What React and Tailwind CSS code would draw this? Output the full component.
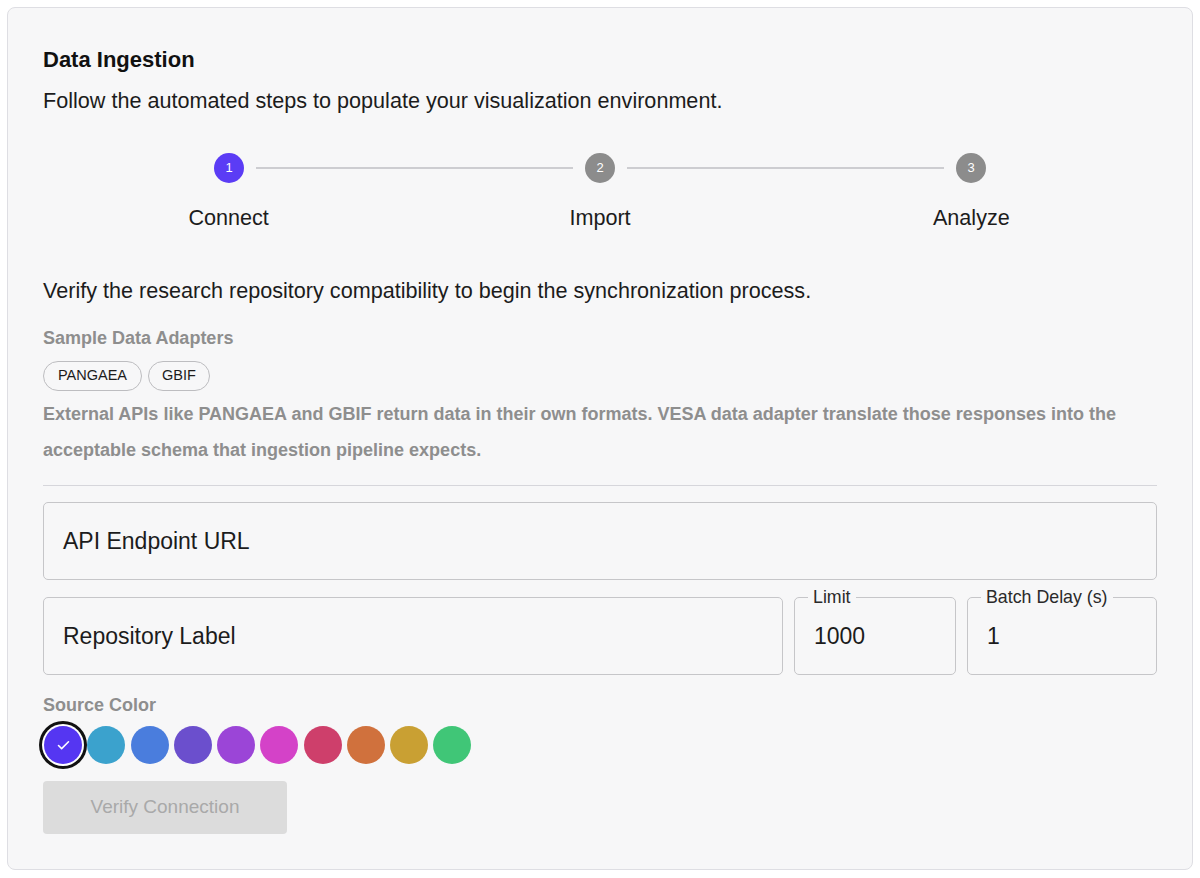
import { Check } from 'lucide-react'

const steps = ['Connect', 'Import', 'Analyze']

const swatches = [
  '#5536f2',
  '#3ba2cd',
  '#4a7ddd',
  '#6b4fcd',
  '#9b45d7',
  '#d442c8',
  '#ce3f6b',
  '#d0713d',
  '#c9a033',
  '#40c677',
]

function StepDot({ n, active }) {
  return (
    <div
      className={`flex h-[30px] w-[30px] shrink-0 items-center justify-center rounded-full text-[13px] text-white ${
        active ? 'bg-[#5b3cf5]' : 'bg-[#8c8c8c]'
      }`}
    >
      {n}
    </div>
  )
}

function OutlinedField({ label, value, className = '' }) {
  return (
    <div
      className={`relative flex h-[78px] items-center rounded-[5px] border border-[#c6c6c9] pl-[19px] text-[23px] text-[#1c1c1c] ${className}`}
    >
      {label && (
        <span className="absolute -top-[11px] left-[13px] bg-[#f7f7f8] px-[5px] text-[17.8px] leading-[20px] text-[#2a2a2a]">
          {label}
        </span>
      )}
      {value}
    </div>
  )
}

export default function App() {
  return (
    <div className="min-h-screen bg-white p-[7px] font-[family-name:'Liberation_Sans',Arial,sans-serif]">
      <div className="rounded-lg border border-[#dedee3] bg-[#f7f7f8] px-[35px] pb-[35px] pt-[38px]">
        <h1 className="text-[22px] font-bold leading-[28px] text-[#111]">Data Ingestion</h1>
        <p className="mt-[12px] text-[21.6px] leading-[30px] text-[#1c1c1c]">
          Follow the automated steps to populate your visualization environment.
        </p>

        {/* stepper */}
        <div className="mt-[37px]">
          <div className="flex items-center px-[171px]">
            <StepDot n={1} active />
            <div className="mx-[12px] h-[2px] flex-1 bg-[#cdcdd1]" />
            <StepDot n={2} />
            <div className="mx-[12px] h-[2px] flex-1 bg-[#cdcdd1]" />
            <StepDot n={3} />
          </div>
          <div className="mt-[20px] grid grid-cols-3 text-center text-[21.6px] leading-[30px] text-[#1c1c1c]">
            {steps.map((s) => (
              <span key={s}>{s}</span>
            ))}
          </div>
        </div>

        <p className="mt-[43px] text-[21.6px] leading-[30px] text-[#1c1c1c]">
          Verify the research repository compatibility to begin the synchronization process.
        </p>

        <div className="mt-[19px] text-[18px] font-bold leading-[26px] text-[#8e8e8e]">
          Sample Data Adapters
        </div>
        <div className="mt-[10px] flex gap-[6px]">
          <span className="flex h-[30px] items-center rounded-full border border-[#bdbdc0] px-[14px] text-[14.5px] text-[#1c1c1c]">
            PANGAEA
          </span>
          <span className="flex h-[30px] items-center rounded-full border border-[#bdbdc0] px-[13px] text-[14.5px] text-[#1c1c1c]">
            GBIF
          </span>
        </div>
        <p className="mt-[5px] text-[18px] font-bold leading-[36px] text-[#8e8e8e]">
          External APIs like PANGAEA and GBIF return data in their own formats. VESA data adapter translate
          those responses into the acceptable schema that ingestion pipeline expects.
        </p>

        <div className="mt-[17px] h-px bg-[#d6d6db]" />

        <OutlinedField value="API Endpoint URL" className="mt-[16px]" />
        <div className="mt-[17px] flex gap-[11px]">
          <OutlinedField value="Repository Label" className="flex-1" />
          <OutlinedField label="Limit" value="1000" className="w-[162px]" />
          <OutlinedField label="Batch Delay (s)" value="1" className="w-[190px]" />
        </div>

        <div className="mt-[17px] text-[18px] font-bold leading-[26px] text-[#8e8e8e]">Source Color</div>
        <div className="mt-[8px] flex gap-[5.25px] pl-px">
          {swatches.map((c, i) => (
            <button
              key={c}
              type="button"
              style={{ backgroundColor: c }}
              className={`flex h-[38px] w-[38px] items-center justify-center rounded-full ${
                i === 0 ? 'shadow-[0_0_0_2px_#fff,0_0_0_5px_#111]' : ''
              }`}
            >
              {i === 0 && <Check size={15} strokeWidth={2.5} className="text-white" />}
            </button>
          ))}
        </div>

        <button
          type="button"
          disabled
          className="mt-[17px] h-[53px] w-[244px] rounded-[4px] bg-[#dcdcdc] text-[19px] text-[#a9a9a9]"
        >
          Verify Connection
        </button>
      </div>
    </div>
  )
}
